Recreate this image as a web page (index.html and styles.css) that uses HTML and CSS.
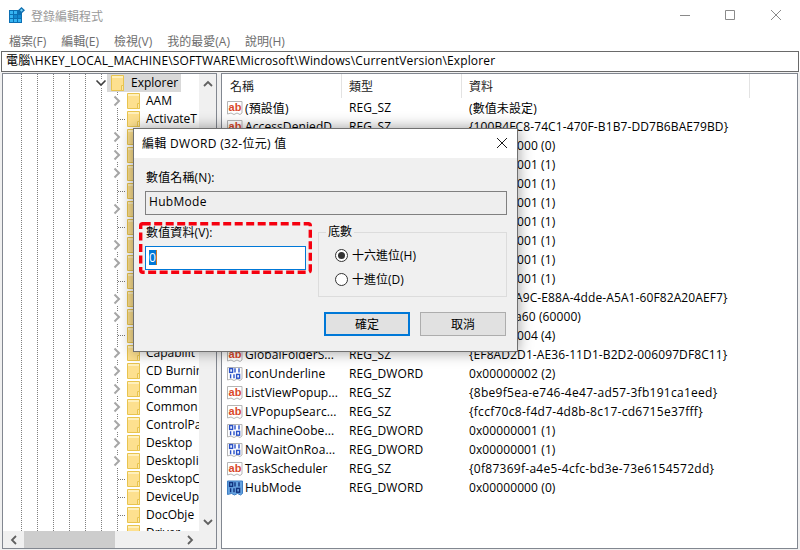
FILE: index.html
```html
<!DOCTYPE html>
<html lang="zh-Hant">
<head>
<meta charset="utf-8">
<title>登錄編輯程式</title>
<link rel="stylesheet" href="styles.css">
</head>
<body>
<svg class="sprites" width="0" height="0" aria-hidden="true">
  <symbol id="folder" viewBox="0 0 13 16">
    <path d="M.5.5h12v15H.5z" fill="#fde08f" stroke="#e8c44f"/>
    <path d="M1 1h11v2H1z" fill="#fff0bd"/>
    <path d="M10.5 10.5h2v5h-2z" fill="#fbe7a8" stroke="#e8c44f"/>
  </symbol>
  <symbol id="chev" viewBox="0 0 8 12"><path d="M1.5 1.5 6 6l-4.5 4.5" fill="none" stroke="#a6a6a6" stroke-width="2"/></symbol>
  <symbol id="ab" viewBox="0 0 16 16">
    <path d="M.5 1.5h14.5v11.5l-2 1.5-3-1.5-3 1.5-3-1.5-3.5 1z" fill="#fff" stroke="#b5b5b5"/>
    <rect x="2" y="2" width="12" height="10" fill="#fff"/>
    <text x="8" y="10.5" class="ab-text">ab</text>
  </symbol>
  <symbol id="bin" viewBox="0 0 16 16">
    <path d="M.5 1.5h14.5v11.5l-2 1.5-3-1.5-3 1.5-3-1.5-3.5 1z" fill="#fff" stroke="#b5b5b5"/>
    <g fill="none" stroke="#2a52c8" stroke-width="1.4">
      <rect x="2.6" y="2.6" width="3" height="3.8"/><path d="M8 2.2v4.4M12 2.2v4.4"/>
      <path d="M3.6 8.2v4M7 8.2v4"/><rect x="9.6" y="8.4" width="3" height="3.8"/>
    </g>
  </symbol>
  <symbol id="bin-sel" viewBox="0 0 16 16">
    <path d="M.5 1h15v12.5l-2 1.5-3-1.5-3 1.5-3-1.5-4 1z" fill="#66a3e0" stroke="#3f7fc4"/>
    <g fill="none" stroke="#12327f" stroke-width="1.4">
      <rect x="2.6" y="2.6" width="3" height="3.8"/><path d="M8 2.2v4.4M12 2.2v4.4"/>
      <path d="M3.6 8.2v4M7 8.2v4"/><rect x="9.6" y="8.4" width="3" height="3.8"/>
    </g>
  </symbol>
</svg>

<div class="window">
  <header class="titlebar">
    <svg class="appicon" width="16" height="16" viewBox="0 0 16 16">
      <rect x="0" y="3" width="13" height="13" fill="#0c6fb3"/>
      <g fill="#35b4f2">
        <rect x="1" y="4" width="3" height="3"/><rect x="5" y="4" width="3" height="3"/>
        <rect x="1" y="8" width="3" height="3"/><rect x="5" y="8" width="3" height="3" fill="#1288cf"/><rect x="9" y="8" width="3" height="3" fill="#1288cf"/>
        <rect x="1" y="12" width="3" height="3"/><rect x="5" y="12" width="3" height="3"/><rect x="9" y="12" width="3" height="3"/>
      </g>
      <path d="M12.5 0 16 3.2 12.5 6.5 9 3.2z" fill="#0f6fb0"/>
      <path d="M12.5 1.8 14 3.2 12.5 4.7 11 3.2z" fill="#7fd4f7"/>
    </svg>
    <span class="title">登錄編輯程式</span>
    <div class="winctl">
      <svg width="46" height="30" viewBox="0 0 46 30"><path d="M19 15.5h10" stroke="#8a8a8a"/></svg>
      <svg width="46" height="30" viewBox="0 0 46 30"><path d="M18.5 10.5h9v9h-9z" fill="none" stroke="#8a8a8a"/></svg>
      <svg width="46" height="30" viewBox="0 0 46 30"><path d="M18 10l10 10M28 10 18 20" stroke="#8a8a8a" fill="none"/></svg>
    </div>
  </header>
  <nav class="menubar">
    <span>檔案(F)</span><span>編輯(E)</span><span>檢視(V)</span><span>我的最愛(A)</span><span>說明(H)</span>
  </nav>
  <div class="address">電腦\HKEY_LOCAL_MACHINE\SOFTWARE\Microsoft\Windows\CurrentVersion\Explorer</div>

  <main class="panes">
    <section class="treepane">
      <div class="treebody">
        <div class="tree">
          <div class="guides"><i></i><i></i><i></i><i></i><i></i><i></i><i class="last"></i></div>
          <div class="node open"><svg class="twist" width="12" height="8" viewBox="0 0 12 8"><path d="M1.5 1.5 6 6l4.5-4.5" fill="none" stroke="#404040" stroke-width="1.6"/></svg><span class="selrow"><svg class="fld" width="13" height="16"><use href="#folder"/></svg><span>Explorer</span></span></div>
          <div class="node child"><svg class="chev" width="8" height="12"><use href="#chev"/></svg><svg class="fld" width="13" height="16"><use href="#folder"/></svg><span>AAM</span></div>
          <div class="node child leaf"><i class="dots"></i><svg class="fld" width="13" height="16"><use href="#folder"/></svg><span>ActivateT</span></div>
          <div class="node child"><svg class="chev" width="8" height="12"><use href="#chev"/></svg><svg class="fld" width="13" height="16"><use href="#folder"/></svg></div>
          <div class="node child"><svg class="chev" width="8" height="12"><use href="#chev"/></svg><svg class="fld" width="13" height="16"><use href="#folder"/></svg></div>
          <div class="node child"><svg class="chev" width="8" height="12"><use href="#chev"/></svg><svg class="fld" width="13" height="16"><use href="#folder"/></svg></div>
          <div class="node child leaf"><i class="dots"></i><svg class="fld" width="13" height="16"><use href="#folder"/></svg></div>
          <div class="node child"><svg class="chev" width="8" height="12"><use href="#chev"/></svg><svg class="fld" width="13" height="16"><use href="#folder"/></svg></div>
          <div class="node child leaf"><i class="dots"></i><svg class="fld" width="13" height="16"><use href="#folder"/></svg></div>
          <div class="node child"><svg class="chev" width="8" height="12"><use href="#chev"/></svg><svg class="fld" width="13" height="16"><use href="#folder"/></svg></div>
          <div class="node child"><svg class="chev" width="8" height="12"><use href="#chev"/></svg><svg class="fld" width="13" height="16"><use href="#folder"/></svg></div>
          <div class="node child leaf"><i class="dots"></i><svg class="fld" width="13" height="16"><use href="#folder"/></svg></div>
          <div class="node child"><svg class="chev" width="8" height="12"><use href="#chev"/></svg><svg class="fld" width="13" height="16"><use href="#folder"/></svg></div>
          <div class="node child"><svg class="chev" width="8" height="12"><use href="#chev"/></svg><svg class="fld" width="13" height="16"><use href="#folder"/></svg></div>
          <div class="node child leaf"><i class="dots"></i><svg class="fld" width="13" height="16"><use href="#folder"/></svg></div>
          <div class="node child"><svg class="chev" width="8" height="12"><use href="#chev"/></svg><svg class="fld" width="13" height="16"><use href="#folder"/></svg><span>Capabilit</span></div>
          <div class="node child"><svg class="chev" width="8" height="12"><use href="#chev"/></svg><svg class="fld" width="13" height="16"><use href="#folder"/></svg><span>CD Burnir</span></div>
          <div class="node child"><svg class="chev" width="8" height="12"><use href="#chev"/></svg><svg class="fld" width="13" height="16"><use href="#folder"/></svg><span>Comman</span></div>
          <div class="node child"><svg class="chev" width="8" height="12"><use href="#chev"/></svg><svg class="fld" width="13" height="16"><use href="#folder"/></svg><span>Common</span></div>
          <div class="node child"><svg class="chev" width="8" height="12"><use href="#chev"/></svg><svg class="fld" width="13" height="16"><use href="#folder"/></svg><span>ControlPa</span></div>
          <div class="node child"><svg class="chev" width="8" height="12"><use href="#chev"/></svg><svg class="fld" width="13" height="16"><use href="#folder"/></svg><span>Desktop</span></div>
          <div class="node child"><svg class="chev" width="8" height="12"><use href="#chev"/></svg><svg class="fld" width="13" height="16"><use href="#folder"/></svg><span>DesktopIi</span></div>
          <div class="node child leaf"><i class="dots"></i><svg class="fld" width="13" height="16"><use href="#folder"/></svg><span>DesktopC</span></div>
          <div class="node child leaf"><i class="dots"></i><svg class="fld" width="13" height="16"><use href="#folder"/></svg><span>DeviceUp</span></div>
          <div class="node child leaf"><i class="dots"></i><svg class="fld" width="13" height="16"><use href="#folder"/></svg><span>DocObje</span></div>
          <div class="node child leaf"><i class="dots"></i><svg class="fld" width="13" height="16"><use href="#folder"/></svg><span>Driver</span></div>
        </div>
        <div class="vscroll">
          <svg width="10" height="8" viewBox="0 0 10 8"><path d="M1 6l4-4 4 4" fill="none" stroke="#606060" stroke-width="1.8"/></svg>
          <svg width="10" height="8" viewBox="0 0 10 8"><path d="M1 2l4 4 4-4" fill="none" stroke="#606060" stroke-width="1.8"/></svg>
        </div>
      </div>
      <div class="hscroll">
        <svg width="8" height="10" viewBox="0 0 8 10"><path d="M6 1 2 5l4 4" fill="none" stroke="#606060" stroke-width="1.8"/></svg>
        <div class="track"><div class="thumb"></div></div>
        <svg width="8" height="10" viewBox="0 0 8 10"><path d="M2 1l4 4-4 4" fill="none" stroke="#606060" stroke-width="1.8"/></svg>
      </div>
    </section>

    <section class="listpane">
      <div class="row head">
        <span class="c1"><span class="hname">名稱</span></span><span class="c2">類型</span><span class="c3">資料</span><span class="c4"></span>
      </div>
      <div class="row"><span class="c1"><svg width="16" height="16"><use href="#ab"/></svg>(預設值)</span><span class="c2">REG_SZ</span><span class="c3">(數值未設定)</span></div>
      <div class="row"><span class="c1"><svg width="16" height="16"><use href="#ab"/></svg>AccessDeniedD</span><span class="c2">REG_SZ</span><span class="c3">{100B4FC8-74C1-470F-B1B7-DD7B6BAE79BD}</span></div>
      <div class="row"><span class="c1"></span><span class="c2"></span><span class="c3 tail">000 (0)</span></div>
      <div class="row"><span class="c1"></span><span class="c2"></span><span class="c3 tail">001 (1)</span></div>
      <div class="row"><span class="c1"></span><span class="c2"></span><span class="c3 tail">001 (1)</span></div>
      <div class="row"><span class="c1"></span><span class="c2"></span><span class="c3 tail">001 (1)</span></div>
      <div class="row"><span class="c1"></span><span class="c2"></span><span class="c3 tail">001 (1)</span></div>
      <div class="row"><span class="c1"></span><span class="c2"></span><span class="c3 tail">001 (1)</span></div>
      <div class="row"><span class="c1"></span><span class="c2"></span><span class="c3 tail">001 (1)</span></div>
      <div class="row"><span class="c1"></span><span class="c2"></span><span class="c3 tail">001 (1)</span></div>
      <div class="row"><span class="c1"></span><span class="c2"></span><span class="c3 tail guid">A9C-E88A-4dde-A5A1-60F82A20AEF7}</span></div>
      <div class="row"><span class="c1"></span><span class="c2"></span><span class="c3 tail guid">a60 (60000)</span></div>
      <div class="row"><span class="c1"></span><span class="c2"></span><span class="c3 tail">004 (4)</span></div>
      <div class="row"><span class="c1"><svg width="16" height="16"><use href="#ab"/></svg>GlobalFolderS...</span><span class="c2">REG_SZ</span><span class="c3">{EF8AD2D1-AE36-11D1-B2D2-006097DF8C11}</span></div>
      <div class="row"><span class="c1"><svg width="16" height="16"><use href="#bin"/></svg>IconUnderline</span><span class="c2">REG_DWORD</span><span class="c3">0x00000002 (2)</span></div>
      <div class="row"><span class="c1"><svg width="16" height="16"><use href="#ab"/></svg>ListViewPopup...</span><span class="c2">REG_SZ</span><span class="c3 lc">{8be9f5ea-e746-4e47-ad57-3fb191ca1eed}</span></div>
      <div class="row"><span class="c1"><svg width="16" height="16"><use href="#ab"/></svg>LVPopupSearc...</span><span class="c2">REG_SZ</span><span class="c3 lc">{fccf70c8-f4d7-4d8b-8c17-cd6715e37fff}</span></div>
      <div class="row"><span class="c1"><svg width="16" height="16"><use href="#bin"/></svg>MachineOobe...</span><span class="c2">REG_DWORD</span><span class="c3">0x00000001 (1)</span></div>
      <div class="row"><span class="c1"><svg width="16" height="16"><use href="#bin"/></svg>NoWaitOnRoa...</span><span class="c2">REG_DWORD</span><span class="c3">0x00000001 (1)</span></div>
      <div class="row"><span class="c1"><svg width="16" height="16"><use href="#ab"/></svg>TaskScheduler</span><span class="c2">REG_SZ</span><span class="c3 lc">{0f87369f-a4e5-4cfc-bd3e-73e6154572dd}</span></div>
      <div class="row"><span class="c1"><svg width="16" height="16"><use href="#bin-sel"/></svg>HubMode</span><span class="c2">REG_DWORD</span><span class="c3">0x00000000 (0)</span></div>
    </section>
  </main>

  <div class="dialog">
    <div class="dlg-title">
      <span>編輯 DWORD (32-位元) 值</span>
      <svg width="12" height="12" viewBox="0 0 12 12"><path d="M1 1l10 10M11 1 1 11" stroke="#1a1a1a" fill="none"/></svg>
    </div>
    <div class="dlg-body">
      <div class="lbl">數值名稱(N):</div>
      <div class="namebox">HubMode</div>
      <div class="dlg-cols">
        <div class="datacol">
          <div class="lbl">數值資料(V):</div>
          <div class="databox"><span class="sel">0</span></div>
          <svg class="redmark" width="173" height="52" viewBox="0 0 173 52"><rect x="1.7" y="1.7" width="169.6" height="48.6" rx="2" fill="none" stroke="#f5000f" stroke-width="3.4" stroke-dasharray="8 3.5"/></svg>
        </div>
        <fieldset class="base">
          <legend>底數</legend>
          <div class="radio"><span class="dot on"></span>十六進位(H)</div>
          <div class="radio"><span class="dot"></span>十進位(D)</div>
        </fieldset>
      </div>
      <div class="btns">
        <button class="btn primary" type="button">確定</button>
        <button class="btn" type="button">取消</button>
      </div>
    </div>
  </div>
</div>
</body>
</html>
```
FILE: styles.css
```css
* { box-sizing: border-box; }
html, body { margin: 0; padding: 0; }
body {
  width: 800px; height: 550px; overflow: hidden; background: #fff;
  font-family: "Open Sans", "Noto Sans CJK TC", sans-serif;
  font-size: 12px; color: #000;
}
.sprites { display: none; }
.ab-text { font: bold 11px "Liberation Sans", sans-serif; fill: #d9482b; text-anchor: middle; }

.window { position: relative; width: 800px; height: 550px; display: flex; flex-direction: column; }

.titlebar { height: 30px; display: flex; align-items: center; padding: 0 1px 0 9px; flex: none; }
.appicon { margin-right: 6px; }
.title { color: #999; padding-top: 1px; }
.winctl { margin-left: auto; display: flex; }
.winctl svg { display: block; }

.menubar { height: 21px; flex: none; display: flex; align-items: center; padding-left: 9px; gap: 15px; color: #6d6d6d; }

.address { height: 21px; flex: none; margin: 0 1px; border: 1px solid #6a6a6a; padding-left: 4px; line-height: 18px; background: #fff; white-space: nowrap; letter-spacing: .14px; }

.panes { flex: 1; min-height: 0; display: flex; gap: 4px; background: #f0f0f0; padding: 1px 2px 1px 2px; }

.treepane { width: 215px; flex: none; display: flex; flex-direction: column; background: #fff; border: 1px solid #828790; overflow: hidden; }
.treebody { flex: 1; min-height: 0; display: flex; overflow: hidden; }
.tree { position: relative; width: 196px; flex: none; overflow: hidden; }
.guides { position: absolute; inset: 0; left: 18px; display: flex; gap: 15px; pointer-events: none; }
.guides i { width: 1px; height: 100%; background: repeating-linear-gradient(#808080 0 1px, transparent 1px 2px); }
.guides .last { margin-top: 18px; }
.node { height: 18px; display: flex; align-items: center; white-space: nowrap; position: relative; }
.node span span, .child > span { margin-top: -2px; }
.open { padding-left: 92px; }
.twist { flex: none; background: #fff; }
.selrow { display: flex; align-items: center; gap: 7px; background: #d9d9d9; height: 18px; width: 74px; padding-left: 4px; }
.child { padding-left: 110px; }
.chev { margin-right: 6px; background: #fff; flex: none; }
.child .fld { margin: 0 6px 0 0; flex: none; }
.leaf .fld { margin-left: 2px; }
.dots { width: 7px; height: 1px; margin-left: 5px; flex: none; background: repeating-linear-gradient(90deg, #777 0 1px, transparent 1px 2px); }
.vscroll { flex: 1; background: #f0f0f0; display: flex; flex-direction: column; justify-content: space-between; align-items: center; padding: 6px 0 5px; }
.hscroll { height: 17px; flex: none; background: #f0f0f0; display: flex; align-items: center; padding: 0 22px 0 7px; gap: 6px; }
.track { flex: 1; height: 100%; }
.thumb { width: 91px; height: 100%; background: #cdcdcd; }

.listpane { flex: 1; background: #fff; border: 1px solid #828790; overflow: hidden; }
.row { height: 19px; display: flex; align-items: center; white-space: nowrap; letter-spacing: .1px; }
.head { height: 24px; color: #1a1a1a; align-items: stretch; }
.head span { display: flex; align-items: center; border-right: 1px solid #e3e3e3; }
.head .hname { border: 0; }
.c1 { width: 120px; padding-left: 5px; display: flex; align-items: center; gap: 2px; overflow: hidden; flex: none; }
.c2 { width: 120px; padding-left: 7px; flex: none; }
.c3 { width: 288px; padding-left: 7px; flex: none; }
.lc { letter-spacing: .28px; }
.tail { padding-left: 55px; }
.guid { padding-left: 53px; }
.head .c1 { padding-left: 8px; }
.head .c4 { border: 0; flex: 1; }

.dialog { position: absolute; left: 133px; top: 128px; width: 385px; height: 224px; border: 1px solid #707070; background: #f0f0f0; box-shadow: 0 0 14px rgba(0,0,0,.4); display: flex; flex-direction: column; }
.dlg-title { height: 29px; flex: none; background: #fff; display: flex; align-items: center; justify-content: space-between; padding: 0 9px 2px 8px; letter-spacing: .3px; }
.dlg-body { flex: 1; padding: 12px 10px 0 11px; }
.lbl { line-height: 16px; padding-left: 1px; height: 16px; margin-bottom: 5px; letter-spacing: .15px; }
.datacol .lbl { margin-bottom: 6px; }
.namebox { height: 24px; border: 1px solid #808080; background: #eee; line-height: 20px; padding-left: 3px; letter-spacing: .3px; }
.dlg-cols { display: flex; gap: 12px; margin-top: 10px; }
.datacol { position: relative; width: 161px; flex: none; }
.databox { height: 24px; border: 1px solid #0078d7; background: #fff; padding: 3px 3px; margin-top: -1px; }
.sel { display: block; width: 8px; height: 15px; line-height: 15px; background: #0078d7; color: #fff; text-align: center; border-right: 1px solid #d07a20; }
.redmark { position: absolute; left: -6px; top: -3px; pointer-events: none; }
.base { flex: 1; height: 72px; margin: 0; padding: 0 0 0 16px; border: 1px solid #dcdcdc; }
.base legend { padding: 0 2px; margin-left: -9px; line-height: 14px; }
.radio { height: 24px; display: flex; align-items: center; gap: 4px; }
.base legend + .radio { margin-top: 4px; }
.dot { width: 13px; height: 13px; border: 1px solid #333; border-radius: 50%; background: #fff; display: flex; align-items: center; justify-content: center; flex: none; }
.dot.on::after { content: ""; width: 7px; height: 7px; border-radius: 50%; background: #333; }
.btns { display: flex; justify-content: flex-end; gap: 10px; margin-top: 15px; padding-right: 1px; }
.btn { width: 86px; height: 24px; background: #e1e1e1; border: 1px solid #adadad; font: inherit; color: #000; padding: 0; }
.btn.primary { border: 2px solid #0078d7; }
```
